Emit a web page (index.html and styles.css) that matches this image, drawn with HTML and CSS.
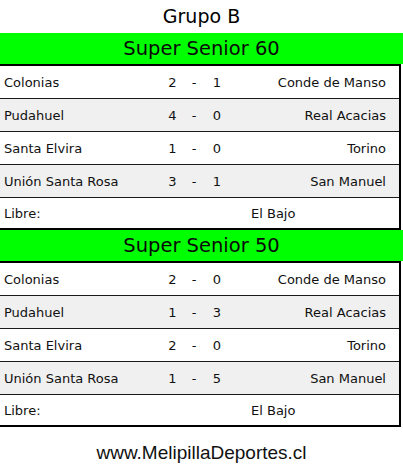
FILE: index.html
```html
<!DOCTYPE html>
<html lang="es">
<head>
<meta charset="utf-8">
<title>Grupo B</title>
<link rel="stylesheet" href="styles.css">
</head>
<body>
<div class="page">
  <h1 class="title">Grupo B</h1>

  <section class="group">
    <h2 class="cat">Super Senior 60</h2>
    <div class="table">
      <div class="row"><span class="t1">Colonias</span><span class="s">2</span><span class="s">-</span><span class="s">1</span><span class="t2">Conde de Manso</span></div>
      <div class="row alt"><span class="t1">Pudahuel</span><span class="s">4</span><span class="s">-</span><span class="s">0</span><span class="t2">Real Acacias</span></div>
      <div class="row"><span class="t1">Santa Elvira</span><span class="s">1</span><span class="s">-</span><span class="s">0</span><span class="t2">Torino</span></div>
      <div class="row alt"><span class="t1">Unión Santa Rosa</span><span class="s">3</span><span class="s">-</span><span class="s">1</span><span class="t2">San Manuel</span></div>
      <div class="row libre"><span class="t1">Libre:</span><span class="bye">El Bajo</span></div>
    </div>
  </section>

  <section class="group">
    <h2 class="cat">Super Senior 50</h2>
    <div class="table">
      <div class="row"><span class="t1">Colonias</span><span class="s">2</span><span class="s">-</span><span class="s">0</span><span class="t2">Conde de Manso</span></div>
      <div class="row alt"><span class="t1">Pudahuel</span><span class="s">1</span><span class="s">-</span><span class="s">3</span><span class="t2">Real Acacias</span></div>
      <div class="row"><span class="t1">Santa Elvira</span><span class="s">2</span><span class="s">-</span><span class="s">0</span><span class="t2">Torino</span></div>
      <div class="row alt"><span class="t1">Unión Santa Rosa</span><span class="s">1</span><span class="s">-</span><span class="s">5</span><span class="t2">San Manuel</span></div>
      <div class="row libre"><span class="t1">Libre:</span><span class="bye">El Bajo</span></div>
    </div>
  </section>

  <p class="footer">www.MelipillaDeportes.cl</p>
</div>
</body>
</html>
```

FILE: styles.css
```css
* { box-sizing: border-box; }
html, body { margin: 0; padding: 0; background: #fff; }
body {
  width: 403px;
  font-family: "DejaVu Sans", Verdana, sans-serif;
  color: #111;
}
.page { display: flex; flex-direction: column; }
.title {
  margin: 0;
  height: 33px;
  line-height: 33px;
  font-size: 19px;
  font-weight: normal;
  text-align: center;
  color: #000;
}
.group { display: flex; flex-direction: column; }
.cat {
  margin: 0;
  height: 31px;
  line-height: 31px;
  background: #00ff00;
  font-size: 19.5px;
  font-weight: normal;
  text-align: center;
  color: #0a0a0a;
}
.table {
  width: 401px;
  border-top: 2px solid #000;
  border-right: 2px solid #000;
  border-bottom: 2px solid #000;
}
.row {
  display: grid;
  grid-template-columns: 160px 25px 18px 28px 1fr;
  align-items: center;
  height: 33px;
  border-bottom: 1px solid #1a1a1a;
  font-size: 13px;
  background: #fff;
}
.row.alt { background: #f0f0f0; }
.row.libre {
  grid-template-columns: 160px 1fr;
  height: 30px;
  border-bottom: none;
}
.t1 { padding-left: 4px; white-space: nowrap; }
.s { text-align: center; }
.t2 { text-align: right; padding-right: 13px; white-space: nowrap; }
.bye { padding-left: 91px; }
.footer {
  margin: 15px 0 0;
  font-family: "Liberation Sans", Arial, sans-serif;
  font-size: 19px;
  line-height: 22px;
  text-align: center;
  color: #111;
}
```
